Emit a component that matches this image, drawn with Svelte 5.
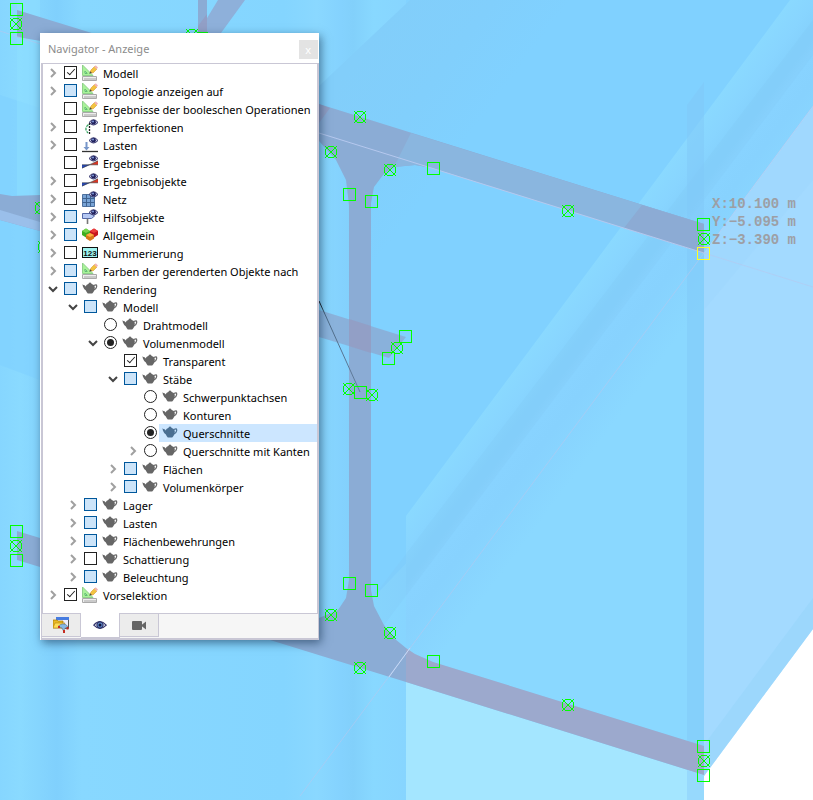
<script lang="ts">
	type Row = {
		id: string;
		label: string;
		level: number;
		icon: string;
		control?: 'check' | 'radio';
		state?: 'on' | 'off' | 'partial';
		arrow?: 'open' | 'closed';
	};

	let rows: Row[] = $state([
		{ id: 'model', label: 'Modell', level: 0, icon: 'draft', state: 'on', arrow: 'closed' },
		{ id: 'topology', label: 'Topologie anzeigen auf', level: 0, icon: 'draft', state: 'partial', arrow: 'closed' },
		{ id: 'boolean', label: 'Ergebnisse der booleschen Operationen', level: 0, icon: 'draft' },
		{ id: 'imperfections', label: 'Imperfektionen', level: 0, icon: 'imperfection', arrow: 'closed' },
		{ id: 'loads', label: 'Lasten', level: 0, icon: 'load', arrow: 'closed' },
		{ id: 'results', label: 'Ergebnisse', level: 0, icon: 'result' },
		{ id: 'result-objects', label: 'Ergebnisobjekte', level: 0, icon: 'result', arrow: 'closed' },
		{ id: 'mesh', label: 'Netz', level: 0, icon: 'mesh', arrow: 'closed' },
		{ id: 'guides', label: 'Hilfsobjekte', level: 0, icon: 'guide', state: 'partial', arrow: 'closed' },
		{ id: 'general', label: 'Allgemein', level: 0, icon: 'cubes', state: 'partial', arrow: 'closed' },
		{ id: 'numbering', label: 'Nummerierung', level: 0, icon: 'number', arrow: 'closed' },
		{ id: 'colors', label: 'Farben der gerenderten Objekte nach', level: 0, icon: 'draft', state: 'partial', arrow: 'closed' },
		{ id: 'rendering', label: 'Rendering', level: 0, icon: 'teapot', state: 'partial', arrow: 'open' },
		{ id: 'r-model', label: 'Modell', level: 1, icon: 'teapot', state: 'partial', arrow: 'open' },
		{ id: 'wire', label: 'Drahtmodell', level: 2, icon: 'teapot', control: 'radio' },
		{ id: 'solid', label: 'Volumenmodell', level: 2, icon: 'teapot', control: 'radio', state: 'on', arrow: 'open' },
		{ id: 'transparent', label: 'Transparent', level: 3, icon: 'teapot', state: 'on' },
		{ id: 'members', label: 'Stäbe', level: 3, icon: 'teapot', state: 'partial', arrow: 'open' },
		{ id: 'axes', label: 'Schwerpunktachsen', level: 4, icon: 'teapot', control: 'radio' },
		{ id: 'outlines', label: 'Konturen', level: 4, icon: 'teapot', control: 'radio' },
		{ id: 'sections', label: 'Querschnitte', level: 4, icon: 'teapot', control: 'radio', state: 'on' },
		{ id: 'sections-edges', label: 'Querschnitte mit Kanten', level: 4, icon: 'teapot', control: 'radio', arrow: 'closed' },
		{ id: 'surfaces', label: 'Flächen', level: 3, icon: 'teapot', state: 'partial', arrow: 'closed' },
		{ id: 'solids', label: 'Volumenkörper', level: 3, icon: 'teapot', state: 'partial', arrow: 'closed' },
		{ id: 'supports', label: 'Lager', level: 1, icon: 'teapot', state: 'partial', arrow: 'closed' },
		{ id: 'r-loads', label: 'Lasten', level: 1, icon: 'teapot', state: 'partial', arrow: 'closed' },
		{ id: 'reinforcement', label: 'Flächenbewehrungen', level: 1, icon: 'teapot', state: 'partial', arrow: 'closed' },
		{ id: 'shading', label: 'Schattierung', level: 1, icon: 'teapot', arrow: 'closed' },
		{ id: 'lighting', label: 'Beleuchtung', level: 1, icon: 'teapot', state: 'partial', arrow: 'closed' },
		{ id: 'preselection', label: 'Vorselektion', level: 0, icon: 'draft', state: 'on', arrow: 'closed' }
	]);

	let selected = $state('sections');
	let activeTab = $state('display');

	const squares = [
		[16, 9], [16, 38], [349, 194], [371, 201], [433, 168], [703, 224], [405, 336], [388, 358],
		[360, 392], [349, 583], [371, 590], [433, 661], [703, 746], [703, 775], [16, 531], [16, 560]
	];
	const circles = [
		[16, 24], [192, 35], [41, 208], [44, 247], [331, 152], [360, 117], [390, 170], [568, 211],
		[704, 239], [397, 348], [349, 389], [372, 395], [331, 615], [390, 633], [360, 668],
		[568, 705], [704, 761], [16, 546]
	];
	const coords = ['X:10.100 m', 'Y:−5.095 m', 'Z:−3.390 m'];

	// a row is hidden while any of its ancestors is collapsed
	let visible = $derived.by(() => {
		let limit = Infinity;
		return rows.filter((row) => {
			if (row.level > limit) return false;
			limit = row.arrow === 'closed' ? row.level : Infinity;
			return true;
		});
	});

	function toggleArrow(row: Row) {
		row.arrow = row.arrow === 'open' ? 'closed' : 'open';
	}

	function change(row: Row) {
		if (row.control === 'radio') {
			rows
				.filter((r) => r.control === 'radio' && r.level === row.level)
				.forEach((r) => (r.state = 'off'));
			row.state = 'on';
		} else {
			row.state = row.state === 'on' ? 'off' : 'on';
		}
		selected = row.id;
	}
</script>

{#snippet eye()}
	<path d="M7 3.5Q11.5-2 16 3.5Q11.5 8.5 7 3.5z" fill="#c9cbe6" stroke="#34346c" />
	<circle cx="11.5" cy="3.2" r="2.4" fill="#20205c" />
	<circle cx="11" cy="2.6" r="1" fill="#7f9bdc" />
{/snippet}

{#snippet icon(name: string)}
	<svg class="icon" viewBox="0 0 16 16" aria-hidden="true">
		{#if name === 'teapot'}
			<g class="teapot">
				<path
					d="M6.7 2.8V2Q8 .8 9.3 2V2.8L11.8 4Q13.6 6 12.6 8.6Q12 10.8 10.2 12.4H5.8Q4.4 11.4 3.9 9.6Q2 8.4 .9 5.4L.4 3.2Q1.4 4 2.6 4.2Q3.4 4.8 3.9 5.6L4.4 4z"
				/>
				<path class="handle" d="M12 4.6Q15 2.6 14.7 5.6Q14.2 8 12 9" />
			</g>
		{:else if name === 'draft'}
			<path d="M.5 0V10.5H11z" fill="#a9f29a" stroke="#8fd08a" />
			<path d="M3 6.2V8.4H5.2z" fill="#fff" stroke="#57b86a" />
			<path d="M8 7.5L9 5L12.5 1.5L15 4L11 8z" fill="#f3c440" stroke="#d69a32" stroke-width=".6" />
			<path d="M12.2 1.8L13.8.2L16 2.6L14.6 4.2z" fill="#f1b4b4" />
			<path d="M7.2 8.8L8.4 6.2L9.9 7.9z" fill="#554a3c" />
			<path d="M.5 11.5H14.5V15.5H.5z" fill="#eee" stroke="#aaa" />
			<path d="M3 13V15M5 13V15M7 13V15M9 13V15M11 13V15M13 13V15" stroke="#888" stroke-width=".7" />
		{:else if name === 'imperfection'}
			{@render eye()}
			<path d="M7.5 4V15" stroke="#222" stroke-width="1.3" stroke-dasharray="2 1" />
			<path d="M6.5 5.5Q1.5 9.5 6 14" fill="none" stroke="#35a560" stroke-width="1.3" stroke-dasharray="3 1" />
		{:else if name === 'load'}
			{@render eye()}
			<path d="M3.5 5H5.5V10H7.5L4.5 13.5L1.5 10H3.5z" fill="#7796c9" />
			<path d="M0 14.5H16" stroke="#333" stroke-width="1.3" />
		{:else if name === 'result'}
			<path d="M0 13.2V9.8H8z" fill="#2849b8" />
			<path d="M8 9.8L16 5.8V9.8z" fill="#d93624" />
			<path d="M0 9.8H16M0 13.2L16 5.8" stroke="#333" stroke-width=".6" />
			{@render eye()}
		{:else if name === 'mesh'}
			<path d="M.5 3.5H12.5V15.5H.5z" fill="#78a3d5" stroke="#4e719e" />
			<path d="M4.5 3.5V15.5M8.5 3.5V15.5M.5 7.5H12.5M.5 11.5H12.5" stroke="#3f6390" />
			{@render eye()}
		{:else if name === 'guide'}
			<path d="M.5 4.5H9.5L12.5 7L9.5 9.5H.5z" fill="#b5c8f4" stroke="#5469a9" />
			<path d="M5.5 9.5V15" stroke="#777" stroke-width="1.6" />
			{@render eye()}
		{:else if name === 'cubes'}
			<path d="M0 4L4 1.5L8 4V8L4 10.5L0 8z" fill="#3eae20" />
			<path d="M0 4L4 1.5L8 4L4 6z" fill="#78d54e" />
			<path d="M8 4L12 1.5L16 4V8L12 10.5L8 8z" fill="#c61720" />
			<path d="M8 4L12 1.5L16 4L12 6z" fill="#ed3d3d" />
			<path d="M4 8L8 6L12 8V11.5L8 14L4 11.5z" fill="#d77818" />
			<path d="M4 8L8 6L12 8L8 10z" fill="#ffad42" />
		{:else if name === 'number'}
			<rect x=".5" y="2.5" width="15" height="10" fill="#9ff4f0" stroke="#111" />
			<text x="8" y="10.5" text-anchor="middle" class="digits">123</text>
		{:else if name === 'views'}
			<path d="M3 0H16V12H3z" fill="#eef" />
			<path d="M15.5 3V11.5H12" fill="none" stroke="#555" />
			<path d="M3 0H16V3H3z" fill="#477ce0" />
			<path d="M0 3H4L5 4H10V11H0z" fill="#e8b925" stroke="#a87500" stroke-width=".7" />
			<path d="M2 6H12L9 11H0z" fill="#ffdc55" stroke="#a87500" stroke-width=".5" />
			<path d="M5 9.5Q10 4.5 14.5 9L14 11.5L12 11L10.5 14L9 11z" fill="#85b8e5" stroke="#596779" stroke-width=".6" />
			<path d="M5 9H7V11H5zM13.5 10H15.5V12.5H13.5zM10 13H12V16H10z" fill="#c52d22" />
		{:else if name === 'eye'}
			<path d="M1.8 8.2Q8 1.2 14.2 8.2Q8 14.8 1.8 8.2z" fill="#eef1fb" stroke="#34346c" stroke-width="1.2" />
			<circle cx="8" cy="8" r="3.2" fill="#5d86c8" stroke="#28285a" />
			<circle cx="8" cy="8" r="1.5" fill="#111439" />
		{:else if name === 'camera'}
			<rect x="1" y="4" width="10" height="9" rx="1" fill="#666" />
			<path d="M10.5 8L15 4.5V12.5L10.5 9z" fill="#666" />
		{/if}
	</svg>
{/snippet}

<main>
	<svg class="scene" viewBox="0 0 813 800" preserveAspectRatio="xMinYMin slice" aria-label="3D-Modell">
		<defs>
			<linearGradient id="shade">
				<stop offset="0" stop-color="#86d6ff" />
				<stop offset=".05" stop-color="#8adaff" />
				<stop offset=".14" stop-color="#80d0fd" />
				<stop offset=".2" stop-color="#88d8ff" />
				<stop offset=".7" stop-color="#84d5ff" />
				<stop offset=".78" stop-color="#8ad8ff" />
				<stop offset=".84" stop-color="#84d2fe" />
				<stop offset=".87" stop-color="#82d0fb" />
				<stop offset=".92" stop-color="#88d8ff" />
				<stop offset="1" stop-color="#87d5ff" />
			</linearGradient>
			<linearGradient id="beam" gradientUnits="userSpaceOnUse" x1="540" y1="335" x2="630" y2="402">
				<stop offset="0" stop-color="#8ad9ff" />
				<stop offset=".18" stop-color="#88d5ff" />
				<stop offset=".34" stop-color="#84d0fc" />
				<stop offset=".44" stop-color="#88d3ff" />
				<stop offset=".6" stop-color="#87d2fe" />
				<stop offset="1" stop-color="#8ad8ff" />
			</linearGradient>
			<linearGradient id="upper" gradientUnits="userSpaceOnUse" x1="370" y1="40" x2="480" y2="122">
				<stop offset="0" stop-color="#82cefa" />
				<stop offset=".55" stop-color="#81cffc" />
				<stop offset="1" stop-color="#80d1ff" />
			</linearGradient>
			<linearGradient id="rope" gradientUnits="userSpaceOnUse" x1="319" y1="301" x2="360" y2="392">
				<stop offset="0" stop-color="#000" />
				<stop offset=".15" stop-color="#4c6a86" />
				<stop offset="1" stop-color="#637e9e" />
			</linearGradient>
		</defs>

		<path d="M0 0H813V800H0z" fill="#fff" />
		<path d="M0 0H704V800H0z" fill="#82d2ff" />
		<path d="M0 0H406V800H0z" fill="url(#shade)" />
		<path d="M0 95L40 108V380L0 365z" fill="#80d2ff" opacity=".7" />
		<path d="M17 0H40V205H17z" fill="#8ee0ff" opacity=".5" />
		<path d="M319 86L410 0H813V106L704 253L371 600V190L319 104z" fill="url(#upper)" />
		<path d="M406 516L790 0H813V106L704 253V746L433 662L406 650z" fill="url(#beam)" />
		<path d="M371 600L813 20V55L384 625z" fill="#7fc8f5" opacity=".25" />
		<path d="M687 105L704 82V776L687 770z" fill="#7fc7f8" opacity=".5" />
		<path d="M704 253L813 106V629L704 776z" fill="#a3daff" />
		<path d="M704 310L813 180V106L704 253z" fill="#9bd5fc" opacity=".3" />
		<path d="M704 745L813 598V629L704 776z" fill="#98d5fb" opacity=".7" />
		<path d="M406 682L704 775V800H406z" fill="#a4e6ff" />
		<path d="M687 770L704 775V800H687z" fill="#97d9fd" />

		<!-- steel section -->
		<g fill="#8bacd5">
			<path d="M17 10L95 34V50L17 37z" />
			<path d="M198 0H207V33H198z" />
			<path d="M218 0H245L221 33H198z" fill="#8eb0da" />
			<path d="M198 26L207 14V33H198z" fill="#929fc6" />
			<path d="M0 194L12 196L40 195V231L0 220z" />
			<path d="M0 210L40 222V231L0 220z" fill="#9abfea" />
			<path d="M17 531L40 538V567L17 560z" />
			<path
				d="M319 104L704 224V253L433 168L415 165L394 167L383 175L374 187L371 203V590L374 606L384 625L395 639L406 648V682L270 640L319 618L338 610L346 598L349 580V205L346 180L336 160L319 141z"
			/>
			<path d="M411 133L704 224V253L433 168L415 165L394 167z" fill="#8ab6df" />
			<path d="M642 205L704 224V253L624 228z" fill="#8cabd4" />
			<path d="M319 310L406 337L389 358L319 337z" opacity=".85" />
			<path d="M349 319L371 326V353L349 346z" fill="#929fc6" />
			<path d="M319 104L330 108L319 123z" fill="#919fc5" />
		</g>
		<path d="M406 648L415 654L433 662L704 746V775L406 682z" fill="#9ca9cd" />

		<g fill="none" stroke="#b5c8ee">
			<path d="M319 133L704 253" />
			<path d="M704 253L813 287M300 796L704 253L813 106" opacity=".6" />
			<path d="M389 677L410 648" stroke="#c5d8f5" />
			<path d="M0 31L40 44" opacity=".6" />
		</g>
		<path d="M319 301L360 392" stroke="url(#rope)" />

		<g class="markers" fill="none" stroke="#0f0">
			{#each squares as [x, y]}
				<rect x={x - 6} y={y - 6} width="12" height="12" />
			{/each}
			{#each circles as [x, y]}
				<circle cx={x} cy={y} r="6" />
				<path d="M{x - 6} {y - 6}L{x + 6} {y + 6}M{x + 6} {y - 6}L{x - 6} {y + 6}" />
			{/each}
			<path d="M197 32H208" />
			<rect x="697" y="247" width="12" height="12" stroke="#ff2" />
		</g>

		{#each coords as line, i}
			<text class="coord" x="712" y={208 + i * 18}>{line}</text>
		{/each}
	</svg>

	<section class="navigator" aria-label="Navigator">
		<header>
			<h1>Navigator - Anzeige</h1>
			<button class="close" aria-label="Schließen">x</button>
		</header>

		<ul class="tree">
			{#each visible as row (row.id)}
				<li class="level-{row.level}">
					{#if row.arrow}
						<button
							class="arrow"
							class:open={row.arrow === 'open'}
							aria-label="{row.label} auf- oder zuklappen"
							onclick={() => toggleArrow(row)}
						>
							<svg viewBox="0 0 12 12" aria-hidden="true"><path d="M4 2L8 6L4 10" /></svg>
						</button>
					{:else}
						<span class="arrow"></span>
					{/if}
					<input
						id={row.id}
						type={row.control === 'radio' ? 'radio' : 'checkbox'}
						class:partial={row.state === 'partial'}
						checked={row.state === 'on'}
						onchange={() => change(row)}
					/>
					<label for={row.id} class:selected={selected === row.id}>
						{@render icon(row.icon)}
						<span>{row.label}</span>
					</label>
				</li>
			{/each}
		</ul>

		<nav>
			<button
				class:active={activeTab === 'data'}
				aria-label="Daten"
				onclick={() => (activeTab = 'data')}>{@render icon('views')}</button
			>
			<button
				class:active={activeTab === 'display'}
				aria-label="Anzeige"
				onclick={() => (activeTab = 'display')}>{@render icon('eye')}</button
			>
			<button
				class:active={activeTab === 'camera'}
				aria-label="Ansichten"
				onclick={() => (activeTab = 'camera')}>{@render icon('camera')}</button
			>
		</nav>
	</section>
</main>

<style>
	main {
		display: flex;
		align-items: flex-start;
		box-sizing: border-box;
		position: relative;
		min-height: 100vh;
		padding: 33px 40px;
		overflow: hidden;
		font-family: 'Noto Sans', 'Segoe UI', sans-serif;
		font-size: 11px;
		color: #000;
	}

	.scene {
		position: absolute;
		inset: 0;
		width: 100%;
		height: 100%;
	}

	.markers {
		shape-rendering: crispEdges;
	}

	.coord {
		font: bold 14px 'Liberation Mono', monospace;
		fill: #9d9fa5;
	}

	.navigator {
		position: relative;
		box-sizing: border-box;
		border: 1px solid #fff;
		border-width: 0 0 0 1px;
		background: #fff;
		box-shadow: 2px 3px 9px rgba(20, 50, 80, 0.6);
	}

	header {
		display: flex;
		align-items: center;
		justify-content: space-between;
		height: 30px;
		padding: 0 1px 0 7px;
	}

	h1 {
		margin: 0;
		font-size: 11px;
		font-weight: 400;
		color: #8c8c8c;
	}

	button {
		padding: 0;
		border: none;
		background: none;
		font: inherit;
	}

	.close {
		width: 19px;
		height: 19px;
		margin-top: 3px;
		background: #e3e3e3;
		color: #fff;
		line-height: 16px;
	}

	.tree {
		margin: 0;
		padding: 0 0 9px;
		border: 2px solid #c9c7d5;
		border-top-width: 1px;
		border-bottom: none;
		list-style: none;
	}

	li {
		display: flex;
		align-items: center;
		height: 18px;
		padding-left: 4px;
	}

	.level-1 {
		padding-left: 24px;
	}

	.level-2 {
		padding-left: 44px;
	}

	.level-3 {
		padding-left: 64px;
	}

	.level-4 {
		padding-left: 84px;
	}

	.arrow {
		flex: none;
		width: 12px;
		height: 12px;
		margin-right: 5px;
	}

	.arrow svg {
		display: block;
		fill: none;
		stroke: #a0a0a0;
		stroke-width: 2;
	}

	.arrow.open svg {
		transform: rotate(90deg);
		stroke: #444;
	}

	input {
		appearance: none;
		position: relative;
		flex: none;
		box-sizing: border-box;
		width: 13px;
		height: 13px;
		margin: 0 2px 1px 0;
		border: 1px solid #222;
		background: #fff;
	}

	input.partial {
		border-color: #00579b;
		background: #cce4f9;
	}

	input[type='checkbox']:checked::after {
		content: '';
		position: absolute;
		top: 0;
		left: 4px;
		width: 3px;
		height: 7px;
		border: solid #222;
		border-width: 0 1px 1px 0;
		transform: rotate(42deg);
	}

	input[type='radio'] {
		border-radius: 50%;
	}

	input[type='radio']:checked::after {
		content: '';
		position: absolute;
		inset: 2px;
		border-radius: 50%;
		background: #222;
	}

	label {
		display: flex;
		flex: 1;
		align-items: center;
		gap: 5px;
		height: 18px;
		padding: 0 6px 0 3px;
		white-space: nowrap;
	}

	label span {
		padding-top: 1px;
	}

	label.selected {
		background: #cce6ff;
	}

	.icon {
		flex: none;
		width: 16px;
		height: 16px;
	}

	.teapot {
		fill: #666;
	}

	.handle {
		fill: none;
		stroke: #666;
		stroke-width: 1.2;
	}

	.selected .teapot {
		fill: #4a6f92;
	}

	.selected .handle {
		fill: none;
		stroke: #4a6f92;
	}

	.digits {
		font: bold 8px 'Liberation Sans', sans-serif;
		fill: #111;
	}

	nav {
		display: flex;
		align-items: flex-start;
		height: 24px;
		border: solid #c9c7d5;
		border-width: 1px 1px 2px 1px;
		background: #f6f6f6;
	}

	nav button {
		display: flex;
		align-items: center;
		justify-content: center;
		box-sizing: border-box;
		width: 39px;
		height: 23px;
		border: solid #c9c7d5;
		border-width: 0 1px 1px 0;
		background: #ececec;
	}

	nav button.active {
		height: 25px;
		margin-top: -1px;
		background: #fff;
	}
</style>
